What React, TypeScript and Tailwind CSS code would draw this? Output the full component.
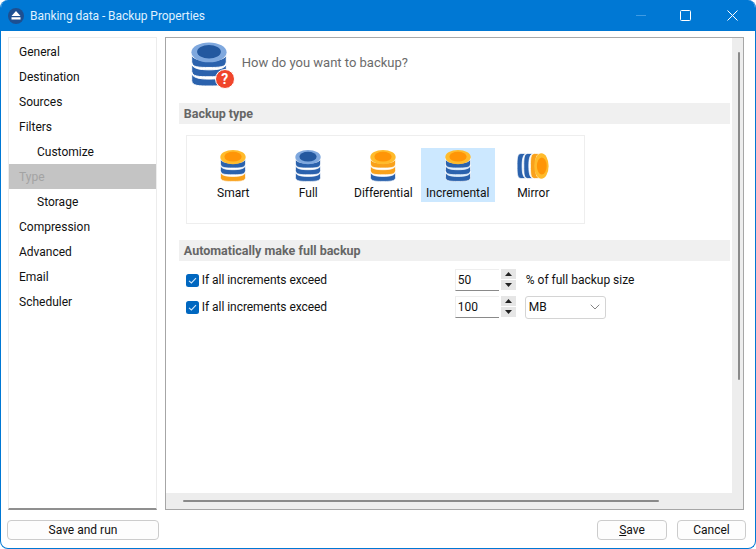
import React from "react";
import { ChevronDown } from "lucide-react";

type DbColors = { rim: string; top: string; layers: string[] };

const BLUE = "#2b62ad";
const ORANGE = "#f9a11b";

// one stacked-disk drawing, used for every backup type
const DbIcon: React.FC<DbColors & { className?: string }> = ({ rim, top, layers, className }) => (
  <svg viewBox="0 0 26 32" className={className}>
    {layers.map((color, i) => {
      const y = 8.5 + i * 6.7;
      return (
        <path
          key={i}
          d={`M0.5 ${y}V${y + 6}C0.5 ${y + 10} 6 ${y + 10} 13 ${y + 10}C20 ${y + 10} 25.5 ${y + 10} 25.5 ${y + 6}V${y}C25.5 ${y + 4} 20 ${y + 5} 13 ${y + 5}C6 ${y + 5} 0.5 ${y + 4} 0.5 ${y}Z`}
          fill={color}
          stroke="#fff"
          strokeWidth="0.7"
        />
      );
    })}
    <ellipse cx="13" cy="7.6" rx="12.7" ry="7.2" fill={rim} />
    <ellipse cx="13" cy="7.2" rx="8.6" ry="4.9" fill={top} />
  </svg>
);

const backupTypes = [
  { name: "Smart", colors: { rim: "#ffbb2c", top: "#ff9507", layers: [BLUE, BLUE, ORANGE] } },
  { name: "Full", colors: { rim: "#7fa8de", top: "#23589f", layers: [BLUE, BLUE, BLUE] } },
  { name: "Differential", colors: { rim: "#ffbb2c", top: "#ff9507", layers: [ORANGE, ORANGE, BLUE] } },
  { name: "Incremental", colors: { rim: "#ffbb2c", top: "#ff9507", layers: [BLUE, BLUE, BLUE] }, selected: true },
  { name: "Mirror", colors: { rim: "#ffbb2c", top: "#ff9507", layers: [ORANGE, BLUE, BLUE] }, sideways: true },
];

const navItems = [
  { name: "General" },
  { name: "Destination" },
  { name: "Sources" },
  { name: "Filters" },
  { name: "Customize", indent: true },
  { name: "Type", active: true },
  { name: "Storage", indent: true },
  { name: "Compression" },
  { name: "Advanced" },
  { name: "Email" },
  { name: "Scheduler" },
];

const SectionHeader: React.FC<{ title: string }> = ({ title }) => (
  <div className="h-[21px] ml-[13px] mr-[2px] pl-[5px] bg-[#f0f0f0] flex items-center font-bold text-[12.5px] text-[#666666]">
    {title}
  </div>
);

const Checkbox: React.FC<{ label: string }> = ({ label }) => (
  <div className="w-[269px] flex items-center gap-[3px]">
    <span className="w-[13px] h-[13px] rounded-[2.5px] bg-[#0067c0] flex items-center justify-center">
      <svg viewBox="0 0 13 13" className="w-[13px] h-[13px]">
        <path d="M3 6.8L5.4 9L10 4.2" fill="none" stroke="#cfe6fa" strokeWidth="1.1" />
      </svg>
    </span>
    <span className="text-[#111111] tracking-[-0.05px]">{label}</span>
  </div>
);

const Spinner: React.FC<{ value: string }> = ({ value }) => (
  <div className="w-[62px] h-[22px] flex">
    <div className="w-[44px] h-[22px] pl-[2px] border-b border-[#8a8a8a] border-t border-t-[#eeeeee] border-l border-l-[#eeeeee] flex items-center text-[#111111]">
      {value}
    </div>
    <div className="ml-[2px] w-[15px] h-[21px] flex flex-col gap-px">
      <div className="h-[10px] bg-[#e6e6e6] flex items-center justify-center">
        <svg viewBox="0 0 7 4" className="w-[7px] h-[4px]">
          <path d="M3.5 0L7 4H0Z" fill="#222222" />
        </svg>
      </div>
      <div className="h-[10px] bg-[#e6e6e6] flex items-center justify-center">
        <svg viewBox="0 0 7 4" className="w-[7px] h-[4px]">
          <path d="M0 0H7L3.5 4Z" fill="#222222" />
        </svg>
      </div>
    </div>
  </div>
);

const FooterButton: React.FC<{ className: string; children: React.ReactNode }> = ({ className, children }) => (
  <button className={`h-[20px] rounded-[4px] border border-[#cccccc] bg-[#fdfdfd] text-[#111111] flex items-center justify-center ${className}`}>
    {children}
  </button>
);

export default function App() {
  return (
    <div className="w-[756px] h-[549px] bg-white overflow-hidden">
      <div className="w-full h-full flex flex-col rounded-[8px] overflow-hidden border-x border-b border-[#0078d4] bg-white text-[12px] leading-[16px] font-['Roboto',sans-serif]">
        {/* title bar */}
        <div className="h-[31px] -mx-px bg-[#0078d4] flex items-center shrink-0">
          <span className="ml-[8px] w-[16px] h-[16px] rounded-full bg-[#1d4f91] flex flex-col items-center justify-center">
            <svg viewBox="0 0 10 9" className="w-[10px] h-[9px]">
              <path d="M5 0L9.5 5H0.5Z M0.5 6.3H9.5V8.5H0.5Z" fill="#ffffff" />
            </svg>
          </span>
          <span className="ml-[6px] text-[#dff0ff] tracking-[-0.06px]">Banking data - Backup Properties</span>
          <div className="ml-auto flex items-center">
            <svg viewBox="0 0 46 31" className="w-[46px] h-[31px]">
              <path d="M0 15.5H10" stroke="#3f9be3" strokeWidth="1" />
            </svg>
            <svg viewBox="0 0 11 11" className="ml-[-2px] w-[11px] h-[11px]">
              <rect x="0.5" y="0.5" width="10" height="10" rx="1" fill="none" stroke="#ffffff" />
            </svg>
            <svg viewBox="0 0 11 11" className="ml-[36px] mr-[18px] w-[11px] h-[11px]">
              <path d="M0.5 0.5L10.5 10.5M10.5 0.5L0.5 10.5" stroke="#ffffff" />
            </svg>
          </div>
        </div>

        {/* panels */}
        <div className="mt-[6px] ml-[7px] mr-[11px] h-[473px] flex gap-[8px] shrink-0">
          <div className="w-[149px] pt-[1px] border border-[#ececec] border-b-[#8f8f8f] border-b-2">
            {navItems.map((item) => (
              <div
                key={item.name}
                className={`h-[25px] flex items-center ${item.indent ? "pl-[28px]" : "pl-[10px]"} ${
                  item.active ? "bg-[#c4c4c4] text-[#a3a3a3]" : "text-[#111111]"
                }`}
              >
                {item.name}
              </div>
            ))}
          </div>

          <div className="w-[580px] flex flex-col border border-[#a6a6a6] border-t-[#a9a9a9]">
            <div className="flex-1 flex min-h-0">
              <div className="flex-1 flex flex-col min-w-0">
                <div className="h-[65px] pl-[25px] flex items-start">
                  <div className="relative w-[38px] h-[46px] mt-[3px]">
                    <DbIcon {...{ rim: "#7fa8de", top: "#23589f", layers: [BLUE, BLUE, BLUE] }} className="w-[36px] h-[46px]" />
                    <span className="absolute left-[24px] top-[28px] w-[20px] h-[20px] rounded-full bg-[#f0452b] border border-white text-white font-bold text-[14px] flex items-center justify-center">
                      ?
                    </span>
                  </div>
                  <span className="ml-[13px] mt-[17px] text-[13px] text-[#6b6b6b]">How do you want to backup?</span>
                </div>

                <SectionHeader title="Backup type" />

                <div className="mt-[11px] ml-[20px] w-[399px] h-[89px] border border-[#eeeeee] pt-[12px] pl-[9px] flex items-start">
                  {backupTypes.map((type) => (
                    <div
                      key={type.name}
                      className={`w-[75px] h-[54px] flex flex-col items-center text-[#111111] ${type.selected ? "bg-[#cce8ff] border-r border-r-white" : ""}`}
                    >
                      <div className="h-[35px] flex items-center justify-center">
                        {type.sideways ? (
                          <DbIcon {...type.colors} className="w-[26px] h-[34px] rotate-90" />
                        ) : (
                          <DbIcon {...type.colors} className="w-[26px] h-[33px]" />
                        )}
                      </div>
                      <span className="mt-[2px] whitespace-nowrap">{type.name}</span>
                    </div>
                  ))}
                </div>

                <div className="mt-[16px]">
                  <SectionHeader title="Automatically make full backup" />
                </div>

                <div className="mt-[8px] ml-[20px] h-[22px] flex items-center">
                  <Checkbox label="If all increments exceed" />
                  <Spinner value="50" />
                  <span className="ml-[9px] text-[#111111]">% of full backup size</span>
                </div>

                <div className="mt-[5px] ml-[20px] h-[22px] flex items-center">
                  <Checkbox label="If all increments exceed" />
                  <Spinner value="100" />
                  <div className="ml-[8px] w-[81px] h-[23px] pl-[3px] pr-[2px] border border-[#d4d4d4] rounded-[3px] flex items-center justify-between text-[#111111]">
                    MB
                    <ChevronDown className="w-[16px] h-[16px] text-[#666666]" strokeWidth={1.2} />
                  </div>
                </div>
              </div>

              {/* vertical scrollbar */}
              <div className="w-[11px] bg-[#ededed] flex justify-center pt-[14px]">
                <div className="w-[2px] h-[328px] bg-[#8a8a8a] rounded-full ml-[3px]" />
              </div>
            </div>

            {/* horizontal scrollbar */}
            <div className="h-[16px] bg-[#ededed] flex items-center pl-[17px]">
              <div className="w-[476px] h-[2px] bg-[#8a8a8a] rounded-full" />
            </div>
          </div>
        </div>

        {/* footer buttons */}
        <div className="mt-[10px] ml-[6px] mr-[9px] flex">
          <FooterButton className="w-[152px]">Save and run</FooterButton>
          <FooterButton className="ml-auto w-[70px]">
            <span>
              <span className="underline">S</span>ave
            </span>
          </FooterButton>
          <FooterButton className="ml-[10px] w-[69px]">Cancel</FooterButton>
        </div>
      </div>
    </div>
  );
}
